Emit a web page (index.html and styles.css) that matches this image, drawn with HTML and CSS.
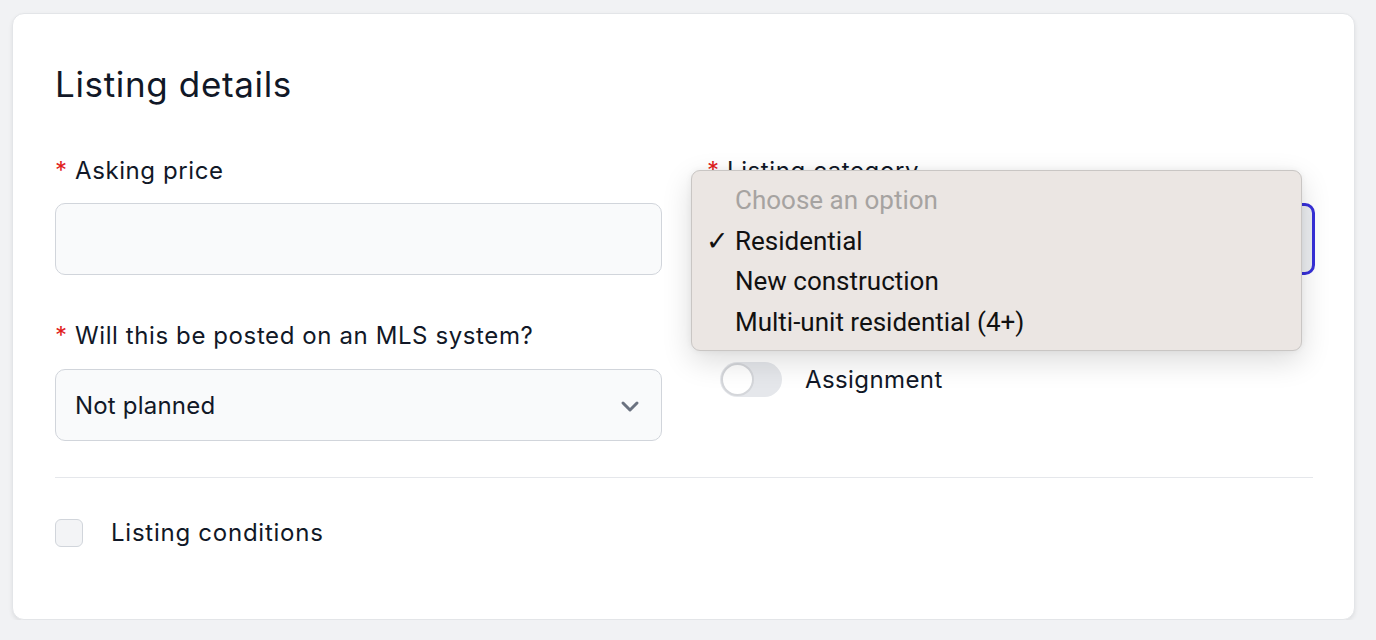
FILE: index.html
```html
<!DOCTYPE html>
<html lang="en">
<head>
<meta charset="utf-8">
<title>Listing details</title>
<link rel="stylesheet" href="styles.css">
</head>
<body>
<main class="card">
  <h1 class="title">Listing details</h1>
  <div class="grid">
    <div class="col">
      <div class="field">
        <label class="label"><span class="req">*</span> Asking price</label>
        <div class="input"></div>
      </div>
      <div class="field field-2">
        <label class="label"><span class="req">*</span> Will this be posted on an MLS system?</label>
        <div class="input select">
          <span>Not planned</span>
          <svg class="chev" width="22" height="22" viewBox="0 0 22 22"><path d="M4 8 L11 15 L18 8" fill="none" stroke="#6b7280" stroke-width="3" stroke-linecap="round" stroke-linejoin="round"/></svg>
        </div>
      </div>
    </div>
    <div class="col col-right">
      <div class="field">
        <label class="label"><span class="req">*</span> Listing category</label>
        <div class="input select focused"></div>
      </div>
      <div class="toggle-row">
        <span class="toggle"><span class="knob"></span></span>
        <span class="toggle-label">Assignment</span>
      </div>
      <div class="popup">
        <div class="opt muted">Choose an option</div>
        <div class="opt"><span class="check">✓</span>Residential</div>
        <div class="opt">New construction</div>
        <div class="opt">Multi-unit residential (4+)</div>
      </div>
    </div>
  </div>
  <hr class="divider">
  <div class="check-row">
    <span class="checkbox"></span>
    <span class="check-label">Listing conditions</span>
  </div>
</main>
</body>
</html>
```

FILE: styles.css
```css
* { box-sizing: border-box; }
html, body { margin: 0; }
body {
  background: #f1f2f4;
  padding: 13px 21px 0 12px;
  font-family: Inter, "Noto Sans", sans-serif;
  color: #111827;
}
.card {
  background: #fff;
  border: 1px solid #e3e5e8;
  border-radius: 12px;
  box-shadow: 0 2px 4px rgba(0,0,0,0.08);
  height: 607px;
  padding: 52px 41px 0 42px;
}
.title {
  margin: 0;
  font-size: 35px;
  line-height: 36px;
  font-weight: 400;
  letter-spacing: 0.65px;
}
.grid {
  display: grid;
  grid-template-columns: 607px 608px;
  column-gap: 45px;
  margin-top: 55px;
}
.col { display: flex; flex-direction: column; }
.col-right { position: relative; }
.label {
  display: block;
  font-size: 24px;
  line-height: 28px;
  letter-spacing: 0.6px;
  margin-bottom: 18px;
}
.req { color: #e11d1d; }
.input {
  height: 72px;
  border: 1px solid #d1d5db;
  border-radius: 10px;
  background: #f9fafb;
}
.field-2 { margin-top: 47px; }
.field-2 .label { margin-bottom: 19px; }
.select {
  display: flex;
  align-items: center;
  justify-content: space-between;
  padding: 0 20px 0 19px;
  font-size: 24px;
  letter-spacing: 0.2px;
}
.chev { margin-top: 1px; }
.focused {
  border: 3px solid #3730d9;
  background: #eceef1;
}
.toggle-row {
  display: flex;
  align-items: center;
  margin-top: 87px;
  padding-left: 13px;
}
.toggle {
  width: 62px;
  height: 35px;
  border-radius: 18px;
  background: #e5e7eb;
  position: relative;
  display: inline-block;
}
.knob {
  position: absolute;
  left: 1px;
  top: 1px;
  width: 33px;
  height: 33px;
  border-radius: 50%;
  background: #fff;
  border: 2px solid #d4d6da;
}
.toggle-label {
  margin-left: 23px;
  font-size: 24px;
  letter-spacing: 0.4px;
}
.popup {
  position: absolute;
  left: -16px;
  top: 13px;
  width: 611px;
  height: 181px;
  background: #ebe6e3;
  border: 1px solid #c9c6c4;
  border-radius: 9px;
  box-shadow: 0 10px 30px rgba(0,0,0,0.14), 0 0 6px rgba(0,0,0,0.06);
  padding: 9px 0 8px 43px;
  font-family: Roboto, "Liberation Sans", sans-serif;
  font-size: 26px;
  color: #111;
}
.opt {
  height: 40.5px;
  line-height: 40.5px;
  position: relative;
}
.opt.muted { color: #a6a3a1; }
.check {
  position: absolute;
  left: -29px;
  font-size: 27px;
  font-weight: 700;
  font-family: "DejaVu Sans", sans-serif;
}
.divider {
  margin: 36px 0 0;
  border: 0;
  border-top: 1px solid #e5e7eb;
}
.check-row {
  display: flex;
  align-items: center;
  margin-top: 40px;
}
.checkbox {
  width: 28px;
  height: 28px;
  border: 1px solid #d1d5db;
  border-radius: 6px;
  background: #f3f4f6;
}
.check-label {
  margin-left: 28px;
  font-size: 24px;
  letter-spacing: 0.75px;
}
```
